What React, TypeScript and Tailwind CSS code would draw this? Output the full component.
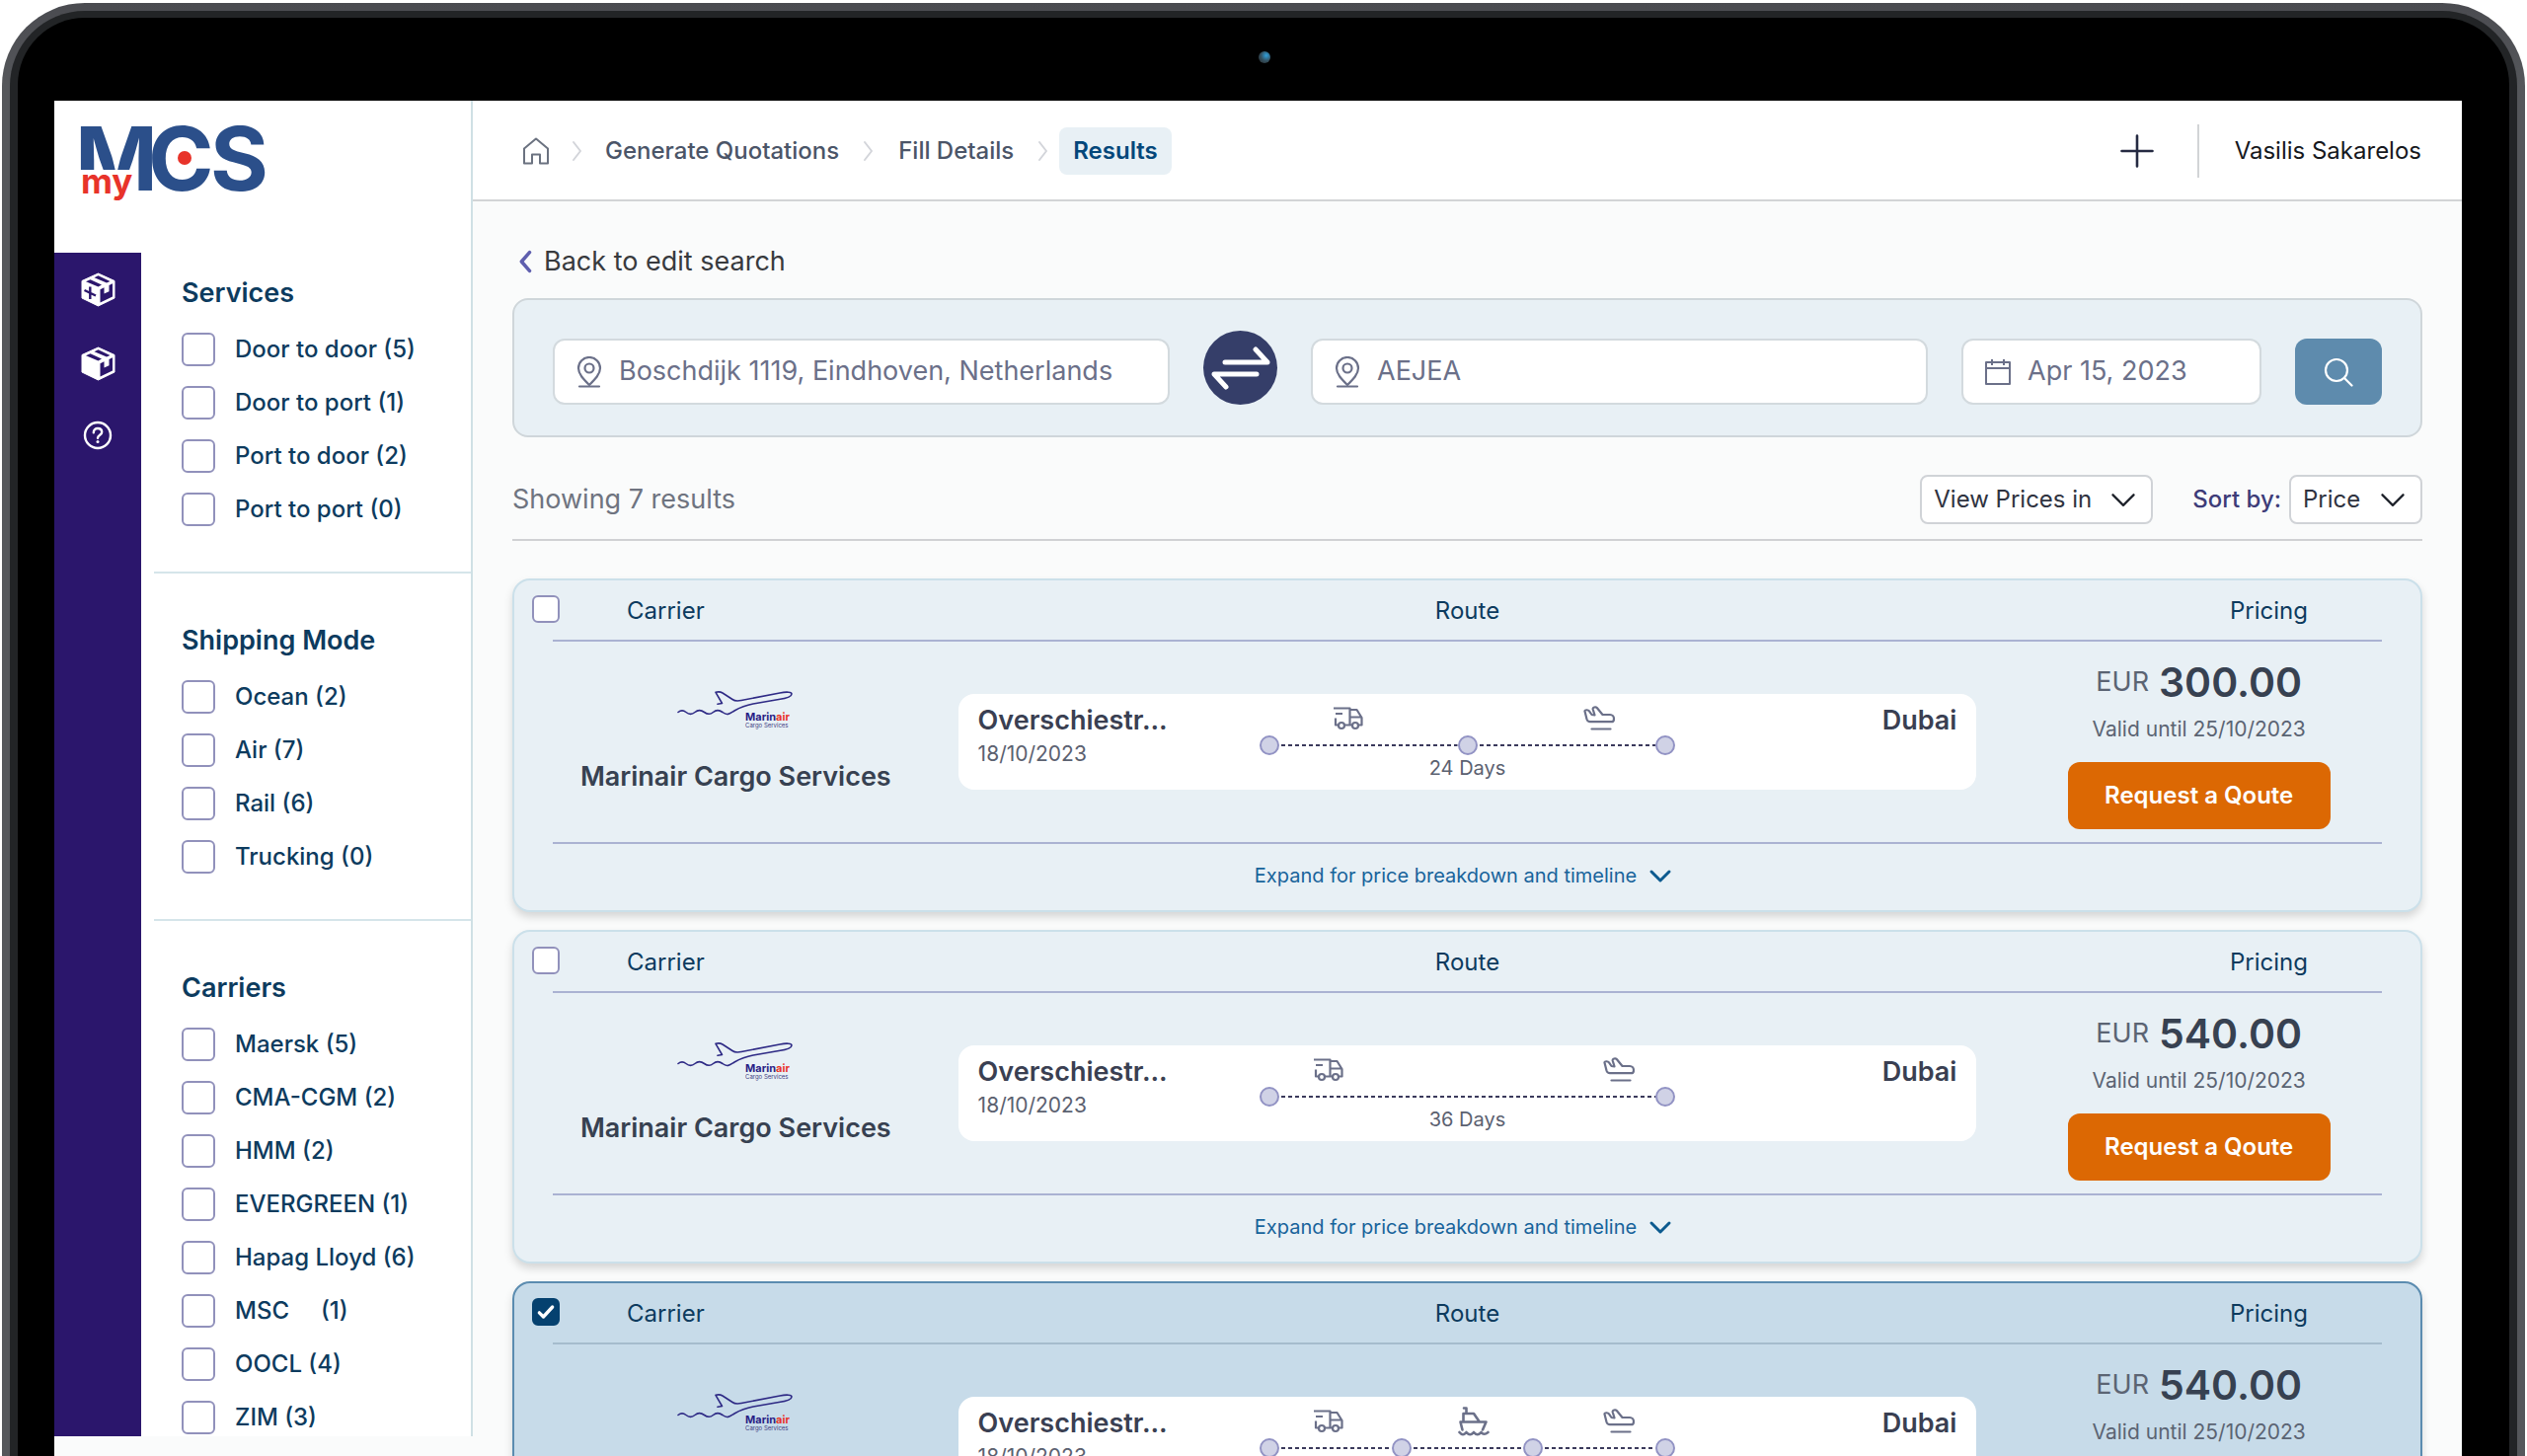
import { useState } from 'react';

interface FilterGroup {
  title: string;
  options: string[];
}

type Mode = 'truck' | 'ship' | 'plane';

interface Quote {
  id: number;
  price: string;
  days: number;
  modes: Mode[];
  stops: number;
}

const filterGroups: FilterGroup[] = [
  { title: 'Services', options: ['Door to door (5)', 'Door to port (1)', 'Port to door (2)', 'Port to port (0)'] },
  { title: 'Shipping Mode', options: ['Ocean (2)', 'Air (7)', 'Rail (6)', 'Trucking (0)'] },
  {
    title: 'Carriers',
    options: [
      'Maersk (5)',
      'CMA-CGM (2)',
      'HMM (2)',
      'EVERGREEN (1)',
      'Hapag Lloyd (6)',
      'MSC     (1)',
      'OOCL (4)',
      'ZIM (3)',
    ],
  },
];

const quotes: Quote[] = [
  { id: 1, price: '300.00', days: 24, modes: ['truck', 'plane'], stops: 3 },
  { id: 2, price: '540.00', days: 36, modes: ['truck', 'plane'], stops: 2 },
  { id: 3, price: '540.00', days: 36, modes: ['truck', 'ship', 'plane'], stops: 4 },
];

/* ---------- Logos ---------- */

function McsLogo() {
  return (
    <svg className="overflow-visible" width="196" height="100" viewBox="0 0 196 100" role="img" aria-label="my MCS" fontFamily="Inter, sans-serif">
      <g fill="#2b4f8a" fontSize="90" fontWeight="700">
        <text x="-6" y="79">M</text>
        <text x="68" y="79">C</text>
        <text x="131" y="79">S</text>
      </g>
      <rect x="-1" y="58" width="52" height="36" fill="#fff" />
      <circle cx="105" cy="46" r="7" fill="#e8332a" />
      <text x="0" y="82" fill="#e8332a" fontSize="35" fontWeight="700">
        my
      </text>
    </svg>
  );
}

function MarinairLogo() {
  return (
    <svg className="overflow-visible" width="117" height="38" viewBox="0 0 117 38" role="img" aria-label="Marinair" fontFamily="Inter, sans-serif">
      <path
        d="M0 21.500c3-2.500 5-2.500 8 0s6 2.500 9 0 6-2.500 9.500 0 6 2.500 9 0 6-2.500 9.500 0c5 4 8 1 12-1.500C63 16.500 68 14.500 76 13L102 8.500c7-1 13-3 13-5.500 0-2-5-2.500-12-1L64 9.500c-4 .8-7 .5-9-1L45 2c-2-1.200-4-1.500-7-.7l6.500 11.200-4.500.8"
        fill="none"
        stroke="#2e2a85"
        strokeWidth="1.600"
        strokeLinejoin="round"
        strokeLinecap="round"
      />
      <text x="68" y="30" fontSize="11" fontWeight="700" fill="#2a1f86">
        Marin<tspan fill="#e8332a">air</tspan>
      </text>
      <text x="68" y="37" fontSize="6" fill="#3a3a80">
        Cargo Services
      </text>
    </svg>
  );
}

/* ---------- Icons ---------- */

function BoxIcon({ plus = false }: { plus?: boolean }) {
  return (
    <svg width="35" height="35" viewBox="0 0 35 35" aria-hidden="true">
      <path d="M17.500 1 34 8.500v17.500L17.500 34 1 26V8.500z" fill="#fff" stroke="#fff" strokeLinejoin="round" />
      <g fill="#2b166c">
        <path d="m5 9.200 4.500-2L21 12.500l-3.500 2z" />
        <path d="m13.500 5.300 4-2L29.500 9 26 10.600z" />
        <path d="M19.500 17.200l4-1.900v6.200l5-2.300v-6.300l3.500-1.600v13.200l-12.500 6z" />
      </g>
      {plus && <path d="M9.300 14.500v12.500M3.500 18l11.500 5.500" stroke="#2b166c" strokeWidth="2.400" fill="none" />}
    </svg>
  );
}

function HelpIcon() {
  return (
    <svg width="30" height="30" viewBox="0 0 30 30" fill="none" stroke="#fff" strokeWidth="2.400" aria-hidden="true">
      <circle cx="15" cy="15" r="13" />
      <path d="M10.800 12.200c0-2.600 1.800-4.200 4.200-4.200s4.200 1.500 4.200 3.800c0 3-4.200 3-4.200 6" strokeLinecap="round" />
      <circle cx="15" cy="21.500" r="1.500" fill="#fff" stroke="none" />
    </svg>
  );
}

function HomeIcon() {
  return (
    <svg width="28" height="28" viewBox="0 0 28 28" fill="none" stroke="#6b7280" strokeWidth="2" strokeLinejoin="round" aria-hidden="true">
      <path d="M2 11.500 14 1.500l12 10V26.500h-8V17.500h-8v9H2z" />
    </svg>
  );
}

function Chevron({ className, points }: { className: string; points: string }) {
  return (
    <svg className={className} viewBox="0 0 24 24" fill="none" stroke="currentColor" strokeLinecap="round" strokeLinejoin="round" aria-hidden="true">
      <polyline points={points} />
    </svg>
  );
}

function PinIcon() {
  return (
    <svg className="h-8 w-7 shrink-0" viewBox="0 0 28 32" fill="none" stroke="#6b7089" strokeWidth="2.200" strokeLinecap="round" strokeLinejoin="round" aria-hidden="true">
      <path d="M14 29C8 23 3 18 3 12a11 11 0 0 1 22 0c0 6-5 11-11 17z" />
      <circle cx="14" cy="12" r="4.500" />
      <path d="M4 30.500h20" />
    </svg>
  );
}

function CalendarIcon() {
  return (
    <svg className="h-7 w-7 shrink-0" viewBox="0 0 28 28" fill="none" stroke="#6b7089" strokeWidth="2" strokeLinejoin="round" aria-hidden="true">
      <path d="M2 4h24v22H2zM2 10h24M8 1v6M20 1v6" />
    </svg>
  );
}

function SwapIcon() {
  return (
    <svg width="60" height="44" viewBox="0 0 60 44" fill="none" stroke="#fff" strokeWidth="5" strokeLinecap="round" strokeLinejoin="round" aria-hidden="true">
      <path d="M14 16h43L45 3M46 28H3l12 13" />
    </svg>
  );
}

function ModeIcon({ mode }: { mode: Mode }) {
  if (mode === 'truck') {
    return (
      <svg width="30" height="24" viewBox="0 0 30 24" fill="none" stroke="#6b7089" strokeWidth="2.200" strokeLinejoin="round" role="img" aria-label="Truck">
        <path d="M0 1.500h16.500v17M2 7h7M2 11.500v7h3M11 18.500h8M16.500 3h7l5 8v7.500H25M16.500 10.500h12" />
        <circle cx="8" cy="19" r="3" />
        <circle cx="22" cy="19" r="3" />
      </svg>
    );
  }
  if (mode === 'ship') {
    return (
      <svg width="32" height="30" viewBox="0 0 32 30" fill="none" stroke="#6b7089" strokeWidth="2.600" strokeLinejoin="round" strokeLinecap="round" role="img" aria-label="Ship">
        <path d="M6 1.500h2.500V7M5.500 15V7H16l5.500 8M2.500 15.500h26l-3.500 8M2.500 15.500l2 8" />
        <path d="M1.500 26c2.500 3 4.500 3 7 0 2.500 3 5 3 7.500 0 2.500 3 5 3 7.500 0 2.500 3 4.500 2 7 0" />
      </svg>
    );
  }
  return (
    <svg width="32" height="26" viewBox="0 0 32 26" fill="none" stroke="#6b7089" strokeWidth="2.200" strokeLinejoin="round" strokeLinecap="round" role="img" aria-label="Plane">
      <path d="M1.500 5.500c-.3-1.500 3.500-1.700 4.500-.2L8.500 9l3 .3L9.700 3.500C9.200 1.500 12.500.8 13.800 2l5.700 7H27c2.500 0 4 2 4 4.200 0 2-.8 3-2.500 3H7c-2 0-3-1-3.500-2.700z" />
      <path d="M8.500 23.500h19" />
    </svg>
  );
}

/* ---------- Sidebar ---------- */

function Filters() {
  return (
    <form className="ml-[13px] flex-1">
      {filterGroups.map((group, idx) => (
        <fieldset
          key={group.title}
          className={`pl-7 ${idx > 0 ? 'border-t-2 border-[#d5e5ea] pt-[50px]' : 'pt-[23px]'} ${idx < filterGroups.length - 1 ? 'pb-[46px]' : 'pb-0.5'}`}
        >
          <legend className="contents">
            <span className="mb-[22px] block text-[27px] font-semibold leading-9">{group.title}</span>
          </legend>
          <div className="flex flex-col gap-5">
            {group.options.map((option) => (
              <label key={option} className="flex h-[34px] items-center gap-5 whitespace-pre text-2xl font-medium">
                <input type="checkbox" className="h-[34px] w-[34px] shrink-0 appearance-none rounded-md border-2 border-[#9191bb] bg-white checked:bg-[#05416f]" />
                {option}
              </label>
            ))}
          </div>
        </fieldset>
      ))}
    </form>
  );
}

function Sidebar() {
  return (
    <aside className="w-[424px] shrink-0 self-start border-r-2 border-[#cfe0e5] bg-white text-[#0d3b5e]">
      <div className="h-[154px] pl-[27px] pt-3">
        <McsLogo />
      </div>
      <div className="flex">
        <nav className="flex w-[88px] flex-col items-center gap-10 bg-[#2b166c] pt-5">
          <button type="button" aria-label="New quotation"><BoxIcon plus /></button>
          <button type="button" aria-label="Shipments"><BoxIcon /></button>
          <button type="button" aria-label="Help"><HelpIcon /></button>
        </nav>
        <Filters />
      </div>
    </aside>
  );
}

/* ---------- Header ---------- */

function Header() {
  return (
    <header className="flex h-[102px] items-center justify-between border-b-2 border-[#d2d4d6] bg-white pl-[50px] pr-[41px] pt-0.5">
      <nav aria-label="Breadcrumb" className="flex items-center text-2xl font-medium text-[#4b5568]">
        <a href="#home" aria-label="Home"><HomeIcon /></a>
        <Chevron className="mx-4 h-6 w-6 text-[#d3d5da] stroke-2" points="8,3 15,12 8,21" />
        <a href="#generate">Generate Quotations</a>
        <Chevron className="mx-[18px] h-6 w-6 text-[#d3d5da] stroke-2" points="8,3 15,12 8,21" />
        <a href="#details">Fill Details</a>
        <Chevron className="ml-[18px] mr-1 h-6 w-6 text-[#d3d5da] stroke-2" points="8,3 15,12 8,21" />
        <a href="#results" aria-current="page" className="rounded-lg bg-[#e8f0f5] px-[14px] py-2 font-semibold text-[#04477a]">
          Results
        </a>
      </nav>
      <div className="flex items-center">
        <button type="button" aria-label="Add">
          <svg width="34" height="34" viewBox="0 0 34 34" stroke="#252a42" strokeWidth="2.600" strokeLinecap="round" aria-hidden="true">
            <path d="M17 1.500v31M1.500 17h31" />
          </svg>
        </button>
        <div className="ml-11 h-[54px] border-l-2 border-[#d2d4d6]" />
        <span className="ml-9 text-2xl text-[#16181d]">Vasilis Sakarelos</span>
      </div>
    </header>
  );
}

/* ---------- Search ---------- */

const field = 'flex h-[67px] items-center gap-4 rounded-xl border-2 border-[#d3dade] bg-white px-[21px] text-[27px] text-[#6b7089]';

function SearchPanel() {
  return (
    <form className="flex items-end gap-[34px] rounded-2xl border-2 border-[#cfd6da] bg-[#e8f0f5] px-[39px] py-[31px]" onSubmit={(e) => e.preventDefault()}>
      <label className={`${field} min-w-0 flex-1`}>
        <PinIcon />
        <input type="text" aria-label="Origin" defaultValue="Boschdijk 1119, Eindhoven, Netherlands" className="w-full min-w-0 bg-transparent outline-none" />
      </label>
      <button type="button" aria-label="Swap origin and destination" className="flex h-[75px] w-[75px] shrink-0 items-center justify-center rounded-full bg-[#353e69]">
        <SwapIcon />
      </button>
      <label className={`${field} min-w-0 flex-1`}>
        <PinIcon />
        <input type="text" aria-label="Destination" defaultValue="AEJEA" className="w-full min-w-0 bg-transparent outline-none" />
      </label>
      <label className={`${field} w-[304px]`}>
        <CalendarIcon />
        <input type="text" aria-label="Date" defaultValue="Apr 15, 2023" className="w-full min-w-0 bg-transparent outline-none" />
      </label>
      <button type="submit" aria-label="Search" className="flex h-[67px] w-[88px] items-center justify-center rounded-xl bg-[#5e8bad]">
        <svg width="30" height="30" viewBox="0 0 30 30" fill="none" stroke="#fff" strokeWidth="2.200" strokeLinecap="round" aria-hidden="true">
          <circle cx="13" cy="13" r="11" />
          <path d="m21 21 7.500 7.500" />
        </svg>
      </button>
    </form>
  );
}

function Dropdown({ id, label, width }: { id: string; label: string; width: string }) {
  return (
    <div className={`relative ${width}`}>
      <select id={id} aria-label={label} className="h-[50px] w-full appearance-none rounded-lg border-2 border-[#d0d3d7] bg-white pl-3 text-2xl text-[#2f3340]">
        <option>{label}</option>
      </select>
      <Chevron className="pointer-events-none absolute right-4 top-[11px] h-7 w-7 text-[#20242c] stroke-2" points="3,8 12,17 21,8" />
    </div>
  );
}

function Toolbar() {
  return (
    <div className="mt-[38px] flex items-center border-b-2 border-[#d0d1d4] pb-[15px]">
      <p className="flex-1 text-[27px] leading-9 text-[#6f7480]">Showing 7 results</p>
      <Dropdown id="currency" label="View Prices in" width="w-[236px]" />
      <label htmlFor="sort" className="ml-10 mr-2 text-2xl font-medium text-[#3d3c78]">Sort by:</label>
      <Dropdown id="sort" label="Price" width="w-[135px]" />
    </div>
  );
}

/* ---------- Results ---------- */

function Timeline({ quote }: { quote: Quote }) {
  return (
    <div className="w-[421px] shrink-0">
      <div className={`flex h-[30px] items-center justify-between ${quote.stops === 3 ? 'pl-[75px] pr-[61px]' : 'pl-[55px] pr-[41px]'}`}>
        {quote.modes.map((mode) => (
          <ModeIcon key={mode} mode={mode} />
        ))}
      </div>
      <div className="mt-0.5 flex items-center">
        {Array.from({ length: quote.stops }, (_, i) => (
          <div key={i} className={`flex items-center ${i > 0 ? 'min-w-0 flex-1' : ''}`}>
            {i > 0 && (
              <svg className="h-0.5 w-0 flex-1" aria-hidden="true">
                <line x1="2" y1="1" x2="100%" y2="1" stroke="#3b3a5c" strokeWidth="2" strokeDasharray="4 3" />
              </svg>
            )}
            <span className="h-5 w-5 shrink-0 rounded-full border-2 border-[#9293c4] bg-[#d0d2e6]" />
          </div>
        ))}
      </div>
      <p className="text-center text-xl leading-[26px] text-[#5b6170]">{quote.days} Days</p>
    </div>
  );
}

function QuoteCard({ quote, selected, onToggle }: { quote: Quote; selected: boolean; onToggle: () => void }) {
  const line = selected ? 'border-[#a5bccd]' : 'border-[#aab2d2]';

  return (
    <article
      className={`rounded-[18px] border-2 shadow-[0_5px_8px_rgba(0,0,0,0.15)] ${
        selected ? 'border-[#5b8cb0] bg-[#c7dbe9]' : 'border-[#cbe0ea] bg-[#e8f0f5]'
      }`}
    >
      <div className="flex h-[60px] items-center pl-[18px] pr-[114px] pt-0.5 text-2xl text-[#0d3b5e]">
        <div className="flex flex-1 items-center">
          <span className="relative mb-1 flex h-7 w-7">
            <input
              type="checkbox"
              aria-label={`Select quote ${quote.id}`}
              checked={selected}
              onChange={onToggle}
              className="h-7 w-7 appearance-none rounded-md border-2 border-[#9191bb] bg-white checked:border-[#05416f] checked:bg-[#05416f]"
            />
            {selected && <Chevron className="pointer-events-none absolute left-1 top-1 h-5 w-5 text-white stroke-4" points="4,13 9,18 20,6" />}
          </span>
          <span className="ml-[68px]">Carrier</span>
        </div>
        {/* keeps the middle label on the centre line of the card */}
        <span className="pl-[96px]">Route</span>
        <span className="flex-1 text-right">Pricing</span>
      </div>

      <div className={`mx-[39px] grid grid-cols-5 items-center border-y-2 ${line}`}>
        <div className="flex flex-col items-center gap-8">
          <MarinairLogo />
          <h2 className="whitespace-nowrap text-[27px] font-semibold leading-[34px] text-[#374151]">Marinair Cargo Services</h2>
        </div>

        <div className="col-span-3 mx-10 flex rounded-2xl bg-white px-5 pb-[9px] pt-[10px]">
          <div className="min-w-0 flex-1">
            <p className="text-[27px] font-semibold leading-[34px] text-[#3a3f52]">Overschiestr...</p>
            <p className="mt-[3px] text-[21px] leading-7 text-[#5b6170]">18/10/2023</p>
          </div>
          <Timeline quote={quote} />
          <p className="min-w-0 flex-1 text-right text-[27px] font-semibold leading-[34px] text-[#3a3f52]">Dubai</p>
        </div>

        <div className="flex flex-col items-center pb-[13px] pt-4">
          <p className="flex items-center gap-[10px] leading-[50px]">
            <span className="text-[27px] text-[#5b6473]">EUR</span>
            <span className="text-[41px] font-semibold text-[#374151]">{quote.price}</span>
          </p>
          <p className="mt-[9px] text-[21px] leading-7 text-[#5b6473]">Valid until 25/10/2023</p>
          <button type="button" className="mt-[19px] h-[68px] w-[266px] rounded-xl bg-[#dc6803] text-2xl font-semibold text-white">
            Request a Qoute
          </button>
        </div>
      </div>

      <button type="button" className="flex h-[67px] w-full items-center justify-center gap-3 pb-1 pr-2 text-xl text-[#17639b]">
        Expand for price breakdown and timeline
        <Chevron className="h-6 w-6 text-[#0c5a8f] stroke-3" points="3,8 12,17 21,8" />
      </button>
    </article>
  );
}

export default function App() {
  const [selected, setSelected] = useState<Record<number, boolean>>({ 3: true });

  const toggle = (id: number) => {
    setSelected((prev) => ({ ...prev, [id]: !prev[id] }));
  };

  return (
    <div className="h-screen overflow-hidden bg-white px-0.5 pt-[3px] font-[Inter,sans-serif]">
      {/* Laptop bezel */}
      <div className="rounded-t-[84px] bg-linear-to-b from-[#4a4b50] to-[#55575b] to-5% px-2 pt-2">
        <div className="rounded-t-[76px] bg-[#222426] px-2 pt-[7px]">
          <div className="rounded-t-[68px] bg-black pl-[37px] pr-12">
            <div className="flex h-[84px] items-center justify-center pb-1 pl-3">
              <div className="h-3 w-3 rounded-full bg-radial-[at_65%_35%] from-[#2fa0dc] via-[#34505f] to-[#26282a]" />
            </div>

            {/* Screen */}
            <div className="flex bg-[#fafbfb]">
              <Sidebar />
              <div className="min-w-0 flex-1">
                <Header />
                <main className="px-10 pb-10 pt-[43px]">
                  <a href="#search" className="mb-[19px] flex items-center gap-1 text-[27px] leading-9 text-[#383a3e]">
                    <Chevron className="h-7 w-7 text-[#5f5fae] stroke-3" points="15,4 8,12 15,20" />
                    Back to edit search
                  </a>
                  <SearchPanel />
                  <Toolbar />
                  <section className="mt-[38px] flex flex-col gap-[18px]">
                    {quotes.map((quote) => (
                      <QuoteCard key={quote.id} quote={quote} selected={!!selected[quote.id]} onToggle={() => toggle(quote.id)} />
                    ))}
                  </section>
                </main>
              </div>
            </div>
          </div>
        </div>
      </div>
    </div>
  );
}
